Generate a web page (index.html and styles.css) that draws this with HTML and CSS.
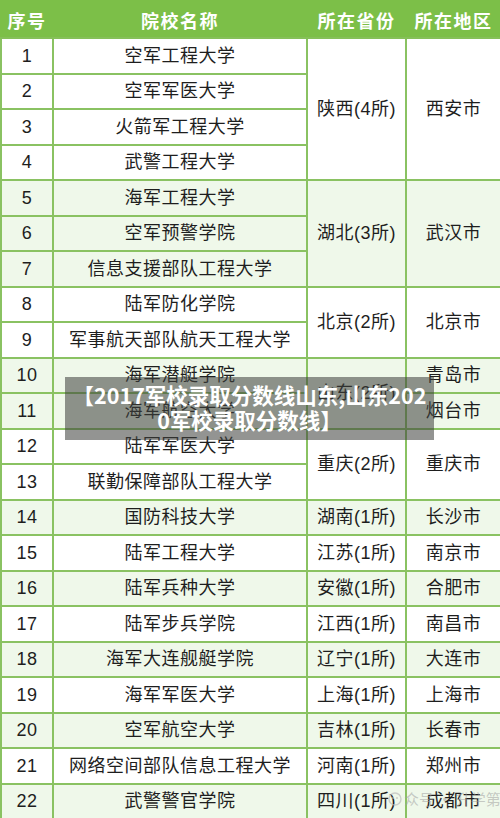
FILE: index.html
```html
<!DOCTYPE html>
<html lang="zh-CN">
<head>
<meta charset="utf-8">
<title>军校录取分数线</title>
<link rel="stylesheet" href="styles.css">
</head>
<body>
<div class="page">
  <table class="schools">
    <colgroup>
      <col class="c-no"><col class="c-name"><col class="c-prov"><col class="c-city">
    </colgroup>
    <thead>
      <tr><th>序号</th><th>院校名称</th><th>所在省份</th><th>所在地区</th></tr>
    </thead>
    <tbody>
      <tr><td>1</td><td>空军工程大学</td><td rowspan="4">陕西(4所)</td><td rowspan="4">西安市</td></tr>
      <tr><td>2</td><td>空军军医大学</td></tr>
      <tr><td>3</td><td>火箭军工程大学</td></tr>
      <tr><td>4</td><td>武警工程大学</td></tr>
      <tr class="alt"><td>5</td><td>海军工程大学</td><td rowspan="3">湖北(3所)</td><td rowspan="3">武汉市</td></tr>
      <tr class="alt"><td>6</td><td>空军预警学院</td></tr>
      <tr class="alt"><td>7</td><td>信息支援部队工程大学</td></tr>
      <tr><td>8</td><td>陆军防化学院</td><td rowspan="2">北京(2所)</td><td rowspan="2">北京市</td></tr>
      <tr><td>9</td><td>军事航天部队航天工程大学</td></tr>
      <tr class="alt"><td>10</td><td>海军潜艇学院</td><td rowspan="2">山东(2所)</td><td>青岛市</td></tr>
      <tr class="alt"><td>11</td><td>海军航空大学</td><td>烟台市</td></tr>
      <tr><td>12</td><td>陆军军医大学</td><td rowspan="2">重庆(2所)</td><td rowspan="2">重庆市</td></tr>
      <tr><td>13</td><td>联勤保障部队工程大学</td></tr>
      <tr class="alt"><td>14</td><td>国防科技大学</td><td>湖南(1所)</td><td>长沙市</td></tr>
      <tr><td>15</td><td>陆军工程大学</td><td>江苏(1所)</td><td>南京市</td></tr>
      <tr class="alt"><td>16</td><td>陆军兵种大学</td><td>安徽(1所)</td><td>合肥市</td></tr>
      <tr><td>17</td><td>陆军步兵学院</td><td>江西(1所)</td><td>南昌市</td></tr>
      <tr class="alt"><td>18</td><td>海军大连舰艇学院</td><td>辽宁(1所)</td><td>大连市</td></tr>
      <tr><td>19</td><td>海军军医大学</td><td>上海(1所)</td><td>上海市</td></tr>
      <tr class="alt"><td>20</td><td>空军航空大学</td><td>吉林(1所)</td><td>长春市</td></tr>
      <tr><td>21</td><td>网络空间部队信息工程大学</td><td>河南(1所)</td><td>郑州市</td></tr>
      <tr class="alt"><td>22</td><td>武警警官学院</td><td>四川(1所)</td><td>成都市</td></tr>
    </tbody>
  </table>
  <div class="caption">【2017军校录取分数线山东,山东2020军校录取分数线】</div>
  <div class="watermark"><svg class="wm-icon" width="14" height="14" viewBox="0 0 14 14"><circle cx="7" cy="7" r="6" fill="none" stroke="#bdbdbd" stroke-width="1.4"/><circle cx="5" cy="6" r="1" fill="#bdbdbd"/><circle cx="9" cy="6" r="1" fill="#bdbdbd"/></svg><span>众号 · 升学第</span></div>
</div>
</body>
</html>
```
FILE: styles.css
```css
html, body {
  margin: 0;
  padding: 0;
  background: #ffffff;
}
.page {
  position: relative;
  width: 500px;
  height: 818px;
  overflow: hidden;
}
.schools {
  width: 500px;
  border-collapse: collapse;
  table-layout: fixed;
  font-family: "Liberation Sans", "Noto Sans CJK SC", sans-serif;
  color: #1e1e1e;
}
.c-no { width: 52px; }
.c-name { width: 254px; }
.c-prov { width: 99px; }
.c-city { width: 95px; }
.schools th {
  height: 35px;
  background: #7cbf48;
  color: #ffffff;
  font-family: "Noto Sans CJK SC", sans-serif;
  font-weight: 700;
  font-size: 18px;
  letter-spacing: 1.5px;
  padding: 0;
  text-align: center;
  border: 2px solid #7cbf48;
  border-bottom-color: #86c05a;
}
.schools td {
  height: 35.5px;
  padding: 0;
  text-align: center;
  vertical-align: middle;
  font-size: 18px;
  letter-spacing: 0.5px;
  line-height: 1;
  border: 2px solid #8ac262;
  box-sizing: border-box;
}
.schools tr.alt td {
  background: #eff8ea;
}
.caption {
  position: absolute;
  left: 65px;
  top: 377px;
  width: 369px;
  height: 63px;
  box-sizing: border-box;
  padding: 5px 6px 0 6px;
  background: rgba(62, 64, 60, 0.56);
  color: #ffffff;
  font-family: "Noto Sans CJK SC", sans-serif;
  font-weight: 700;
  font-size: 21.5px;
  line-height: 25px;
  text-align: center;
  word-break: break-all;
}
.watermark {
  position: absolute;
  left: 388px;
  top: 788px;
  display: flex;
  align-items: center;
  gap: 2px;
  font-family: "Noto Sans CJK SC", sans-serif;
  font-size: 15px;
  color: rgba(160, 160, 160, 0.55);
  white-space: nowrap;
}
.wm-icon { opacity: 0.7; }
```
